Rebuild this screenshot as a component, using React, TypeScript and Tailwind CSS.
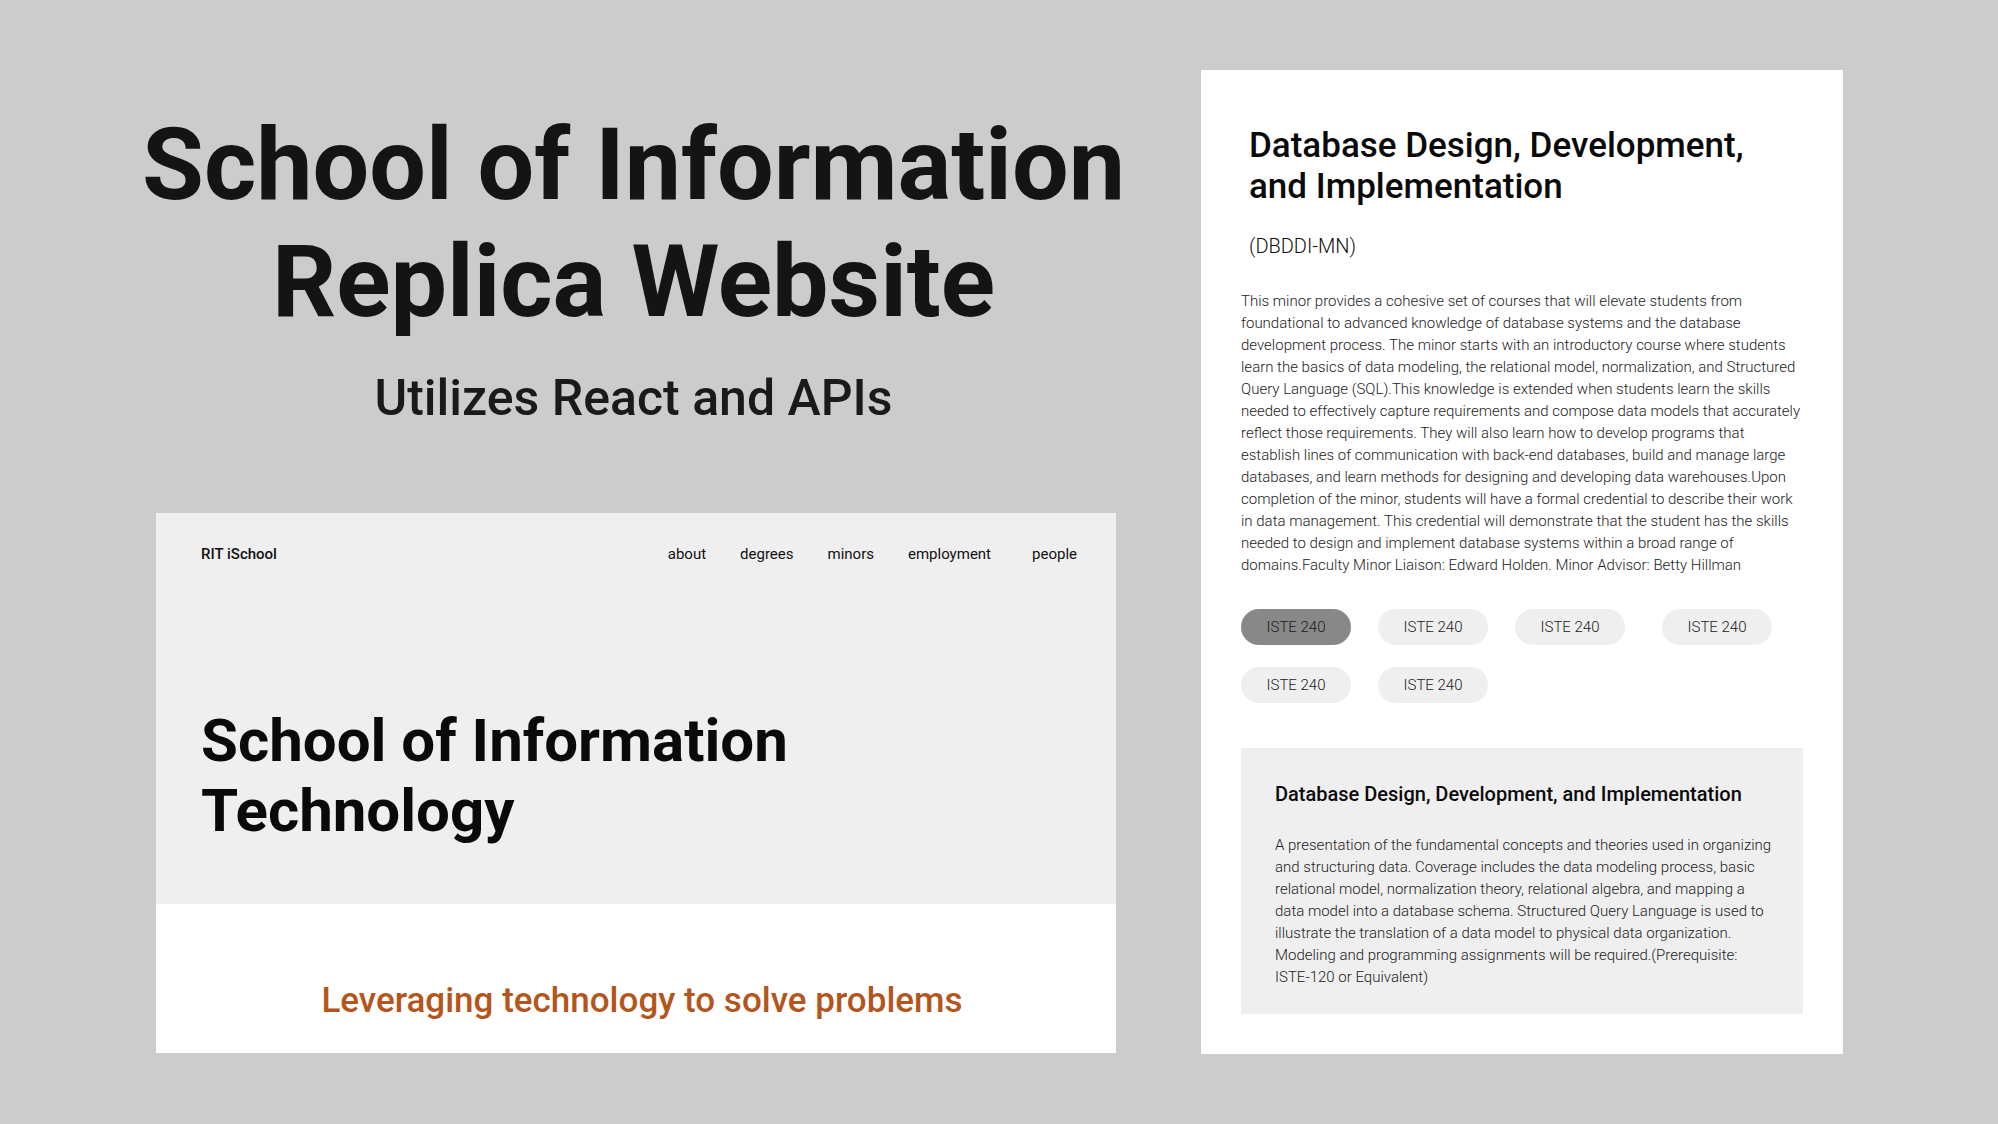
import React from "react";

const pills = [true, false, false, false, false, false];

export default function App() {
  return (
    <div className="w-[1998px] h-[1124px] bg-[#cccccc] flex items-start pt-[70px] pl-[156px] gap-[85px] font-['Roboto',sans-serif] overflow-hidden">
      {/* Left column */}
      <div className="w-[960px] flex flex-col items-center">
        <h1 className="mt-[37px] mr-[5px] text-[100.5px] leading-[117px] font-bold text-[#141414] text-center whitespace-nowrap">
          School of Information
          <br />
          Replica Website
        </h1>
        <p className="mt-[27px] mr-[5px] text-[50px] leading-[60px] font-medium text-[#1a1a1a] text-center whitespace-nowrap">
          Utilizes React and APIs
        </p>
        <div className="mt-[85px] w-[960px] h-[540px] bg-white flex flex-col">
          <div className="h-[391px] bg-[#efefef] pl-[45px] pr-[39px] pt-[31px]">
            <nav className="flex items-center justify-between h-[20px] text-[15px] text-[#111]">
              <span className="font-medium">RIT iSchool</span>
              <div className="flex items-center">
                <span>about</span>
                <span className="ml-[34px]">degrees</span>
                <span className="ml-[34px]">minors</span>
                <span className="ml-[34px]">employment</span>
                <span className="ml-[41px]">people</span>
              </div>
            </nav>
            <h2 className="mt-[142px] text-[60px] leading-[70px] font-bold text-[#0a0a0a]">
              School of Information
              <br />
              Technology
            </h2>
          </div>
          <div className="flex-1 pt-[76px] pl-[12px] text-center">
            <p className="text-[35px] leading-[42px] font-medium text-[#b4561c]">
              Leveraging technology to solve problems
            </p>
          </div>
        </div>
      </div>

      {/* Right card */}
      <div className="w-[642px] h-[984px] bg-white px-[40px] pt-[55px] pb-[40px] flex flex-col">
        <h2 className="pl-[8px] text-[35px] leading-[41px] font-medium text-[#0a0a0a]">
          Database Design, Development,
          <br />
          and Implementation
        </h2>
        <p className="pl-[8px] mt-[25px] text-[20px] leading-[28px] font-light text-[#111]">(DBDDI-MN)</p>
        <p className="mt-[30px] text-[15px] leading-[22px] font-light text-[#222]">
          This minor provides a cohesive set of courses that will elevate students from foundational to advanced
          knowledge of database systems and the database development process. The minor starts with an introductory
          course where students learn the basics of data modeling, the relational model, normalization, and Structured
          Query Language (SQL).This knowledge is extended when students learn the skills needed to effectively capture
          requirements and compose data models that accurately reflect those requirements. They will also learn how to
          develop programs that establish lines of communication with back-end databases, build and manage large
          databases, and learn methods for designing and developing data warehouses.Upon completion of the minor,
          students will have a formal credential to describe their work in data management. This credential will
          demonstrate that the student has the skills needed to design and implement database systems within a broad
          range of domains.Faculty Minor Liaison: Edward Holden. Minor Advisor: Betty Hillman
        </p>
        <div className="mt-[33px] flex flex-wrap gap-x-[27px] gap-y-[22px]">
          {pills.map((active, i) => (
            <div
              key={i}
              className={
                "w-[110px] h-[36px] rounded-full flex items-center justify-center text-[15px] font-light text-[#1a1a1a] " +
                (active ? "bg-[#888888]" : "bg-[#efefef]") +
                (i === 3 ? " ml-[10px]" : "")
              }
            >
              ISTE 240
            </div>
          ))}
        </div>
        <div className="mt-[45px] bg-[#efefef] pl-[34px] pr-[28px] pt-[32px] pb-[26px]">
          <h3 className="text-[20px] leading-[28px] font-medium text-[#0a0a0a]">
            Database Design, Development, and Implementation
          </h3>
          <p className="mt-[26px] text-[15px] leading-[22px] font-light text-[#222]">
            A presentation of the fundamental concepts and theories used in organizing and structuring data. Coverage
            includes the data modeling process, basic relational model, normalization theory, relational algebra, and
            mapping a data model into a database schema. Structured Query Language is used to illustrate the translation
            of a data model to physical data organization. Modeling and programming assignments will be
            required.(Prerequisite: ISTE-120 or Equivalent)
          </p>
        </div>
      </div>
    </div>
  );
}
